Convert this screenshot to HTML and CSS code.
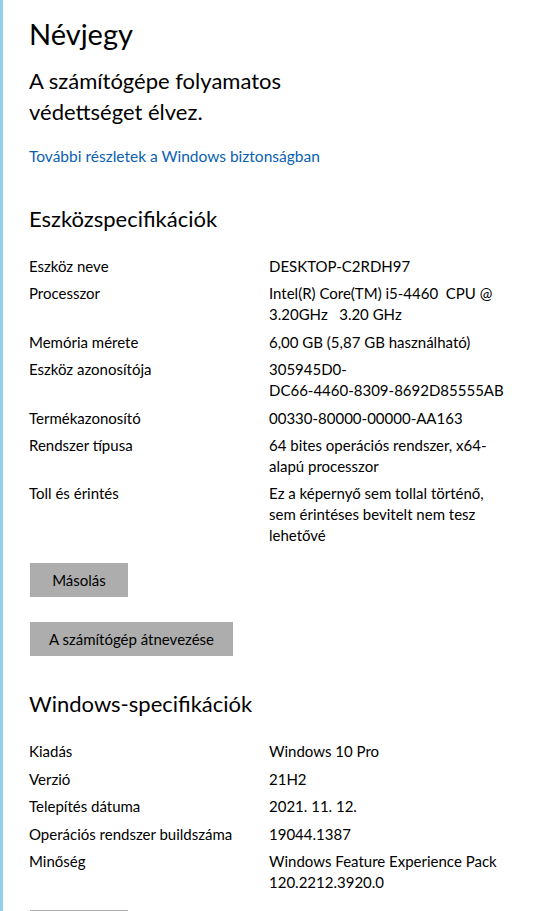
FILE: index.html
```html
<!DOCTYPE html>
<html lang="hu">
<head>
<meta charset="utf-8">
<title>Névjegy</title>
<link rel="stylesheet" href="styles.css">
</head>
<body>
<main class="page">
  <h1 class="title">Névjegy</h1>
  <p class="status">A számítógépe folyamatos<br>védettséget élvez.</p>
  <a class="link" href="#">További részletek a Windows biztonságban</a>

  <section class="section">
    <h2 class="heading">Eszközspecifikációk</h2>
    <dl class="specs">
      <dt>Eszköz neve</dt><dd>DESKTOP-C2RDH97</dd>
      <dt>Processzor</dt><dd>Intel(R) Core(TM) i5-4460&nbsp; CPU @ 3.20GHz&nbsp;&nbsp; 3.20 GHz</dd>
      <dt>Memória mérete</dt><dd>6,00 GB (5,87 GB használható)</dd>
      <dt>Eszköz azonosítója</dt><dd>305945D0-<span class="nowrap">DC66-4460-8309-8692D85555AB</span></dd>
      <dt>Termékazonosító</dt><dd>00330-80000-00000-AA163</dd>
      <dt>Rendszer típusa</dt><dd>64 bites operációs rendszer, x64-alapú processzor</dd>
      <dt>Toll és érintés</dt><dd>Ez a képernyő sem tollal történő, sem érintéses bevitelt nem tesz lehetővé</dd>
    </dl>
    <div class="actions">
      <button class="btn btn-copy">Másolás</button>
      <button class="btn btn-rename">A számítógép átnevezése</button>
    </div>
  </section>

  <section class="section section-win">
    <h2 class="heading">Windows-specifikációk</h2>
    <dl class="specs">
      <dt>Kiadás</dt><dd>Windows 10 Pro</dd>
      <dt>Verzió</dt><dd>21H2</dd>
      <dt>Telepítés dátuma</dt><dd>2021. 11. 12.</dd>
      <dt>Operációs rendszer buildszáma</dt><dd>19044.1387</dd>
      <dt>Minőség</dt><dd>Windows Feature Experience Pack 120.2212.3920.0</dd>
    </dl>
    <div class="actions">
      <button class="btn btn-copy">Másolás</button>
    </div>
  </section>
</main>
</body>
</html>
```
FILE: styles.css
```css
html, body {
  margin: 0;
  padding: 0;
  background: #ffffff;
}
body {
  font-family: Lato, "Liberation Sans", sans-serif;
  color: #000000;
  border-left: 3px solid #93cfe9;
  min-height: 911px;
  box-sizing: border-box;
  overflow: hidden;
}
.page {
  padding: 16px 0 0 26px;
}
.title {
  margin: 0;
  font-size: 29px;
  line-height: 36px;
  font-weight: 400;
}
.status {
  margin: 13px 0 0;
  font-size: 22px;
  line-height: 31px;
  font-weight: 400;
}
.link {
  display: block;
  margin-top: 19px;
  font-size: 15.5px;
  line-height: 21px;
  color: #0a5fb4;
  text-decoration: none;
}
.section {
  margin-top: 37px;
}
.section-win {
  margin-top: 33px;
}
.heading {
  margin: 0;
  font-size: 22px;
  line-height: 30px;
  font-weight: 400;
}
.specs {
  margin: 22px 0 0;
  display: grid;
  grid-template-columns: 240px 236px;
  row-gap: 6.4px;
  font-size: 15px;
  line-height: 21px;
}
.specs dt, .specs dd {
  margin: 0;
}
.nowrap {
  white-space: nowrap;
}
.actions {
  margin-top: 17px;
  display: flex;
  flex-direction: column;
  align-items: flex-start;
  gap: 25px;
}
.section-win .actions {
  margin-top: 17px;
}
.btn {
  margin-left: 1px;
  height: 34px;
  padding: 0 14px;
  border: none;
  background: #adadad;
  color: #000000;
  font-family: Lato, "Liberation Sans", sans-serif;
  font-size: 15px;
}
.btn-copy {
  width: 98px;
}
.btn-rename {
  width: 203px;
}
```
